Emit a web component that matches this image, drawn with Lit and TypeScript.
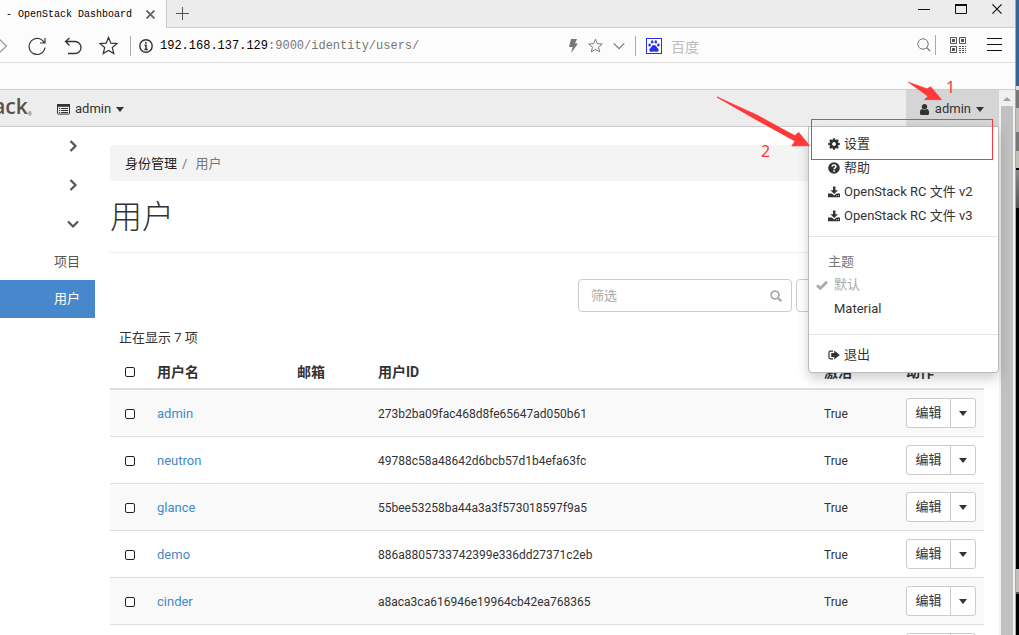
import { LitElement, html, css, svg, TemplateResult } from "lit";
import { customElement, property } from "lit/decorators.js";

const COG =
  "M1152 896q0-106-75-181t-181-75-181 75-75 181 75 181 181 75 181-75 75-181zm512-109v222q0 12-8 23t-20 13l-185 28q-19 54-39 91 35 50 107 138 10 12 10 25t-9 23q-27 37-99 108t-94 71q-12 0-26-9l-138-108q-44 23-91 38-16 136-29 186-7 28-36 28h-222q-14 0-24.5-8.5t-11.5-21.5l-28-184q-49-16-90-37l-141 107q-10 9-25 9-14 0-25-11-126-114-165-168-7-10-7-23 0-12 8-23 15-21 51-66.5t54-70.5q-27-50-41-99l-183-27q-13-2-21-12.5t-8-23.5v-222q0-12 8-23t19-13l186-28q14-46 39-92-40-57-107-138-10-12-10-24 0-10 9-23 26-36 98.5-107.5t94.5-71.5q13 0 26 10l138 107q44-23 91-38 16-136 29-186 7-28 36-28h222q14 0 24.5 8.5t11.5 21.5l28 184q49 16 90 37l142-107q9-9 24-9 13 0 25 10 129 119 165 170 7 8 7 22 0 12-8 23-15 21-51 66.5t-54 70.5q26 50 41 98l183 28q13 2 21 12.5t8 23.5z";
const USER =
  "M1536 1399q0 109-62.5 187t-150.5 78h-854q-88 0-150.5-78t-62.5-187q0-85 8.5-160.5t31.5-152 58.5-131 94-89 134.5-34.5q131 128 313 128t313-128q76 0 134.5 34.5t94 89 58.5 131 31.5 152 8.5 160.5zm-256-887q0 159-112.5 271.5t-271.5 112.5-271.5-112.5-112.5-271.5 112.5-271.5 271.5-112.5 271.5 112.5 112.5 271.5z";

interface Glyph {
  box: string;
  body: TemplateResult;
}

const GLYPHS: Record<string, Glyph> = {
  cog: { box: "100 100 1592 1592", body: svg`<path fill="currentColor" d=${COG} />` },
  user: { box: "128 128 1536 1536", body: svg`<path fill="currentColor" d=${USER} />` },
  help: {
    box: "0 0 12 12",
    body: svg`<circle cx="6" cy="6" r="5.8" fill="currentColor" />
      <path d="M4 4.6C4.1 2.6 8 2.5 8 4.6C8 6 6.2 5.9 6.1 7.3" fill="none" stroke="#fff" stroke-width="1.5" />
      <rect x="5.3" y="8.2" width="1.6" height="1.6" fill="#fff" />`,
  },
  download: {
    box: "0 0 12 12",
    body: svg`<path fill="currentColor" d="M5 .5h2.400v3.700h2.600L6.200 8 2.400 4.200H5z" />
      <path fill="currentColor" d="M0 7.400h3.800l2.400 2 2.300-2H12V11.200H0z" />
      <path stroke="#fff" stroke-width=".8" d="M8.200 9.700h.9M10 9.700h.9" />`,
  },
  check: {
    box: "0 0 12 12",
    body: svg`<path d="M1 6.200L4.300 9.400 11 2.800" fill="none" stroke="currentColor" stroke-width="2.800" />`,
  },
  exit: {
    box: "0 0 12 12",
    body: svg`<path d="M5 2.200H2.200Q1 2.200 1 3.400v5.200q0 1.200 1.200 1.200H5" fill="none" stroke="currentColor" stroke-width="1.200" />
      <path fill="currentColor" d="M3.200 4h3V1.500L11.800 6 6.200 10.500V8h-3z" />`,
  },
  list: {
    box: "0 0 13 11",
    body: svg`<rect x=".5" y=".5" width="12" height="9.600" rx=".8" fill="none" stroke="currentColor" />
      <path fill="currentColor" d="M0 0h13v2.800H0z" />
      <path stroke="currentColor" d="M2 4.500h1.200M4.200 4.500H11M2 6.500h1.200M4.200 6.500H11M2 8.500h1.200M4.200 8.500H11" />`,
  },
  caret: { box: "0 0 8 5", body: svg`<path fill="currentColor" d="M0 0h8L4 5z" />` },
  right: {
    box: "0 0 12 12",
    body: svg`<path d="M3.500 1L8.500 6 3.500 11" fill="none" stroke="currentColor" stroke-width="2.200" />`,
  },
  down: {
    box: "0 0 12 12",
    body: svg`<path d="M1 3.500L6 8.500 11 3.500" fill="none" stroke="currentColor" stroke-width="2.200" />`,
  },
  search: {
    box: "0 0 12 12",
    body: svg`<circle cx="5" cy="5" r="3.900" fill="none" stroke="currentColor" stroke-width="1.800" />
      <path d="M8 8l3.400 3.400" stroke="currentColor" stroke-width="2.200" />`,
  },
  thinSearch: {
    box: "0 0 14 14",
    body: svg`<circle cx="6" cy="6" r="5.200" fill="none" stroke="currentColor" />
      <path d="M9.800 9.800l3.400 3.200" stroke="currentColor" stroke-width="1.200" />`,
  },
  forward: { box: "0 0 8 16", body: svg`<path d="M-1 1L6.500 8-1 15" fill="none" stroke="currentColor" stroke-width="1.200" />` },
  reload: {
    box: "0 0 18 18",
    body: svg`<path d="M16.200 5.800A8 8 0 1 0 17 10.500M17 1v5h-5" fill="none" stroke="currentColor" stroke-width="1.200" />`,
  },
  undo: {
    box: "0 0 18 18",
    body: svg`<path d="M5.500 1L1.500 4.500l4 4M1.500 4.500H11a6 6 0 0 1 0 12H4" fill="none" stroke="currentColor" stroke-width="1.300" />`,
  },
  star: {
    box: "0 0 20 20",
    body: svg`<path d="M10 1.500l2.500 6 6.500.5-5 4.200 1.600 6.300L10 15.200l-5.600 3.300L6 12.200 1 8l6.500-.5z" fill="none" stroke="currentColor" stroke-width="1.300" />`,
  },
  info: {
    box: "0 0 14 14",
    body: svg`<circle cx="7" cy="7" r="6.200" fill="none" stroke="currentColor" stroke-width="1.400" />
      <path d="M6.900 3v1.800M5.600 6.300h1.400v4M5.400 10.400h3.400" fill="none" stroke="currentColor" stroke-width="1.500" />`,
  },
  bolt: { box: "0 0 10 14", body: svg`<path fill="currentColor" d="M3 0h6L7 4.600h3L3.200 14l1.400-6H1z" />` },
  chevron: { box: "0 0 12 12", body: svg`<path d="M.8 3.400L6 8.600l5.200-5.200" fill="none" stroke="currentColor" stroke-width="1.200" />` },
  paw: {
    box: "0 0 16 16",
    body: svg`<rect x=".5" y=".5" width="15" height="15" fill="#fff" stroke="currentColor" />
      <g fill="currentColor"><ellipse cx="3.600" cy="7" rx="1.300" ry="1.600" /><ellipse cx="6.200" cy="3.900" rx="1.300" ry="1.700" />
      <ellipse cx="9.800" cy="3.900" rx="1.300" ry="1.700" /><ellipse cx="12.400" cy="7" rx="1.300" ry="1.600" />
      <path d="M8 7c2 0 2.400 2 3.800 3.200 1.400 1.200 1 3.600-1 3.600-1 0-1.800-.4-2.800-.4s-1.800.4-2.800.4c-2 0-2.400-2.400-1-3.600C5.600 9 6 7 8 7z" /></g>`,
  },
  qr: {
    box: "0 0 16 16",
    body: svg`<g fill="none" stroke="currentColor"><path d="M.5.5h6v6h-6zM9.500.5h6v6h-6zM.5 9.500h6v6h-6z" />
      <path stroke-dasharray="2 1" d="M9 9.500h7M9 11.500h7M9 13.500h7M9 15.500h7" /></g>
      <path fill="currentColor" d="M2 2h3v3H2zM11 2h3v3h-3zM2 11h3v3H2z" />`,
  },
  menu: { box: "0 0 15 14", body: svg`<path stroke="currentColor" d="M0 .5h15M0 6.500h15M0 12.500h15" />` },
  close: { box: "0 0 8 8", body: svg`<path stroke="currentColor" stroke-width="1.700" d="M.5.5l7 7M7.500.5l-7 7" />` },
  plus: { box: "0 0 13 13", body: svg`<path stroke="currentColor" d="M6.500 0v13M0 6.500h13" />` },
  min: { box: "0 0 12 10", body: svg`<path stroke="currentColor" d="M0 5.500h12" />` },
  max: { box: "0 0 12 10", body: svg`<path fill="none" stroke="currentColor" d="M.5 1h11v8.500H.5z" /><path stroke="currentColor" stroke-width="2" d="M0 1h12" />` },
  quit: { box: "0 0 10 10", body: svg`<path stroke="currentColor" stroke-width="1.200" d="M.4.4l9.200 9.200M9.600.4L.4 9.600" />` },
  arrowUp: { box: "0 0 8 4", body: svg`<path fill="currentColor" d="M0 4L4 0l4 4z" />` },
};

function icon(name: string, width: number, height: number = width) {
  const g = GLYPHS[name];
  return html`<svg class="ico" width=${width} height=${height} viewBox=${g.box} aria-hidden="true">${g.body}</svg>`;
}

const base = css`
  * { box-sizing: border-box; }
  button, input {
    font: inherit;
    color: inherit;
    background: none;
    border: 0;
    padding: 0;
    margin: 0;
    border-radius: 0;
  }
  a { text-decoration: none; color: inherit; }
  ul, ol { list-style: none; margin: 0; padding: 0; }
  .ico { display: block; flex: none; }
`;

@customElement("browser-chrome")
export class BrowserChrome extends LitElement {
  static styles = [
    base,
    css`
      :host { display: block; background: #fcfcfc; color: #333; }
      .tabs {
        display: flex;
        height: 28px;
        background: #ececec;
        border-bottom: 1px solid #ccc;
      }
      .tab {
        display: flex;
        align-items: center;
        gap: 14px;
        height: 28px;
        padding: 0 11px 0 6px;
        background: #fcfcfc;
        border-right: 1px solid #ccc;
        font: 10px "Liberation Mono", monospace;
        color: #000;
      }
      .tab button { color: #666; }
      .new { margin-left: 9px; color: #555; }
      .win {
        display: flex;
        align-items: center;
        gap: 25px;
        margin-left: auto;
        padding: 0 13px 10px 0;
        color: #111;
      }
      .bar {
        display: flex;
        align-items: center;
        height: 35px;
        border-bottom: 1px solid #ddd;
      }
      .nav { display: flex; align-items: center; gap: 17px; padding-top: 1px; }
      .nav .go { color: #999; margin-right: 2px; }
      .sep { width: 1px; height: 20px; background: #aaa; }
      .nav .sep { margin-right: -9px; margin-left: -5px; }
      .url {
        flex: 1;
        padding: 2px 0 0 7px;
        font: 12px "Liberation Mono", monospace;
        color: #777;
      }
      .host { color: #000; }
      .quick {
        display: flex;
        align-items: center;
        gap: 10px;
        padding-top: 1px;
        color: #777;
      }
      .engine {
        display: flex;
        align-items: center;
        gap: 9px;
        width: 271px;
        color: #2932e1;
      }
      .engine input {
        width: 200px;
        font: 14px "Noto Sans CJK SC", sans-serif;
      }
      .engine input::placeholder { color: #bbb; opacity: 1; }
      .tools {
        display: flex;
        align-items: center;
        padding-right: 13px;
        color: #111;
      }
      .tools .find { color: #777; margin-right: 4px; }
      .tools .qr { color: #555; margin: 0 21px 0 14px; }
      .marks { height: 27px; border-bottom: 1px solid #ccc; }
    `,
  ];

  render() {
    return html`
      <div class="tabs">
        <div class="tab">
          <span>- OpenStack Dashboard</span>
          <button aria-label="关闭标签页">${icon("close", 9)}</button>
        </div>
        <button class="new" aria-label="新标签页">${icon("plus", 13)}</button>
        <div class="win">
          <button aria-label="最小化">${icon("min", 12, 10)}</button>
          <button aria-label="最大化">${icon("max", 12, 10)}</button>
          <button aria-label="关闭">${icon("quit", 10)}</button>
        </div>
      </div>
      <div class="bar">
        <div class="nav">
          <button class="go" aria-label="前进">${icon("forward", 8, 16)}</button>
          <button aria-label="刷新">${icon("reload", 20, 18)}</button>
          <button aria-label="撤销">${icon("undo", 18)}</button>
          <button aria-label="收藏">${icon("star", 19)}</button>
          <span class="sep"></span>
          ${icon("info", 14)}
        </div>
        <div class="url"><span class="host">192.168.137.129</span>:9000/identity/users/</div>
        <div class="quick">
          <button aria-label="极速模式">${icon("bolt", 10, 14)}</button>
          <button aria-label="添加书签">${icon("star", 15)}</button>
          <button aria-label="展开">${icon("chevron", 12)}</button>
          <span class="sep"></span>
          <div class="engine">
            ${icon("paw", 16)}
            <input type="text" placeholder="百度" aria-label="搜索" />
          </div>
        </div>
        <div class="tools">
          <button class="find" aria-label="搜索">${icon("thinSearch", 14)}</button>
          <span class="sep"></span>
          <button class="qr" aria-label="二维码">${icon("qr", 16)}</button>
          <button aria-label="菜单">${icon("menu", 15, 14)}</button>
        </div>
      </div>
      <div class="marks"></div>
    `;
  }
}

@customElement("top-nav")
export class TopNav extends LitElement {
  static styles = [
    base,
    css`
      :host { display: block; }
      .nav {
        display: flex;
        height: 37px;
        background: #ededed;
        border-bottom: 1px solid #ccc;
      }
      .brand {
        display: flex;
        justify-content: flex-end;
        align-items: center;
        width: 32px;
        overflow: hidden;
        color: #5a5250;
        font: 600 21px/30px "Open Sans", sans-serif;
        padding-bottom: 4px;
      }
      .brand small { font-size: 5px; line-height: 6px; align-self: flex-end; padding-bottom: 5px; font-weight: 400; }
      .pick { display: flex; align-items: center; gap: 5px; padding: 2px 15px 0 14px; }
      .project { margin-left: 11px; }
      .user { position: relative; display: flex; margin-left: auto; }
      .user .pick { background: #d5d5d5; padding-left: 13px; }
      .menu {
        position: absolute;
        z-index: 2;
        top: 36px;
        right: 0;
        width: 191px;
        padding: 5px 0;
        background: #fff;
        border: 1px solid #bbb;
        border-radius: 0 0 4px 4px;
        box-shadow: 0 6px 12px rgba(0, 0, 0, 0.18);
      }
      .menu a {
        display: flex;
        align-items: center;
        gap: 4px;
        height: 24px;
        padding-left: 19px;
        white-space: pre;
      }
      .menu .theme { padding-left: 25px; }
      .menu .on { padding-left: 7px; gap: 6px; color: #aaa; }
      .line { height: 1px; margin: 8px 0; background: #e5e5e5; }
      .title { height: 28px; padding: 5px 0 0 19px; line-height: 23px; color: #777; }
      .themes { padding-bottom: 5px; }
    `,
  ];

  render() {
    return html`
      <nav class="nav">
        <a class="brand" href="#">ack<small>®</small></a>
        <button class="pick project">${icon("list", 13, 11)}<span>admin</span>${icon("caret", 8, 5)}</button>
        <div class="user">
          <button class="pick" aria-expanded="true">${icon("user", 11)}<span>admin</span>${icon("caret", 8, 5)}</button>
          <div class="menu">
            <a href="#">${icon("cog", 12)}设置</a>
            <a href="#">${icon("help", 12)}帮助</a>
            <a href="#">${icon("download", 12)}OpenStack RC 文件 v2</a>
            <a href="#">${icon("download", 12)}OpenStack RC 文件 v3</a>
            <div class="line"></div>
            <div class="title">主题</div>
            <div class="themes">
              <a class="on" href="#">${icon("check", 12)}默认</a>
              <a class="theme" href="#">Material</a>
            </div>
            <div class="line"></div>
            <a href="#">${icon("exit", 12)}退出</a>
          </div>
        </div>
      </nav>
    `;
  }
}

@customElement("side-nav")
export class SideNav extends LitElement {
  static styles = [
    base,
    css`
      :host { display: block; width: 95px; flex: none; color: #555; }
      .group, .sub a {
        display: flex;
        width: 100%;
        align-items: center;
        justify-content: flex-end;
        padding-right: 16px;
      }
      .group { height: 39px; padding-bottom: 2px; }
      .sub a { height: 36px; padding-right: 15px; }
      .sub .on { height: 38px; background: #4788cc; color: #fff; }
    `,
  ];

  render() {
    return html`
      <button class="group" aria-label="项目面板">${icon("right", 12)}</button>
      <button class="group" aria-label="管理员">${icon("right", 12)}</button>
      <button class="group" aria-label="身份管理">${icon("down", 12)}</button>
      <ul class="sub">
        <li><a href="#">项目</a></li>
        <li><a class="on" href="#">用户</a></li>
      </ul>
    `;
  }
}

interface Account {
  name: string;
  id: string;
  enabled: string;
}

@customElement("user-table")
export class UserTable extends LitElement {
  @property({ attribute: false }) rows: Account[] = [];

  static styles = [
    base,
    css`
      :host { display: block; }
      table { width: 100%; table-layout: fixed; border-collapse: separate; border-spacing: 0; }
      caption { height: 34px; padding: 0 9px; line-height: 36px; text-align: left; }
      th, td { padding: 2px 8px 0; text-align: left; white-space: nowrap; }
      th { height: 36px; border-bottom: 2px solid #ddd; font-weight: 700; font-size: 14px; }
      td { height: 47px; border-bottom: 1px solid #ddd; }
      tbody tr:nth-child(odd) { background: #f9f9f9; }
      .c-check { width: 39px; }
      .c-name { width: 140px; }
      .c-mail { width: 81px; }
      .c-on { width: 82px; }
      .c-act { width: 86px; }
      .check { padding-left: 15px; }
      .check input {
        display: block;
        appearance: none;
        width: 10px;
        height: 10px;
        border: 1px solid #222;
        border-radius: 2px;
        background: #fff;
      }
      .name { color: #428bca; }
      .small { font-size: 12px; }
      .act { padding-top: 0; }
      .split {
        display: flex;
        width: 70px;
        height: 30px;
        border: 1px solid #ccc;
        border-radius: 3px;
        background: #fff;
      }
      .edit { flex: 1; }
      .more { display: grid; place-items: center; width: 25px; border-left: 1px solid #ccc; }
    `,
  ];

  render() {
    return html`
      <table>
        <caption>正在显示 7 项</caption>
        <colgroup>
          <col class="c-check" /><col class="c-name" /><col class="c-mail" /><col />
          <col class="c-on" /><col class="c-act" />
        </colgroup>
        <thead>
          <tr>
            <th class="check"><input type="checkbox" aria-label="全选" /></th>
            <th>用户名</th>
            <th>邮箱</th>
            <th>用户ID</th>
            <th>激活</th>
            <th>动作</th>
          </tr>
        </thead>
        <tbody>
          ${this.rows.map(
            (r) => html`<tr>
              <td class="check"><input type="checkbox" aria-label="选择 ${r.name}" /></td>
              <td><a class="name" href="#">${r.name}</a></td>
              <td></td>
              <td class="small">${r.id}</td>
              <td class="small">${r.enabled}</td>
              <td class="act">
                <div class="split">
                  <button class="edit">编辑</button>
                  <button class="more" aria-label="更多动作">${icon("caret", 8, 5)}</button>
                </div>
              </td>
            </tr>`
          )}
        </tbody>
      </table>
    `;
  }
}

@customElement("guide-marks")
export class GuideMarks extends LitElement {
  static styles = css`
    :host {
      position: absolute;
      z-index: 5;
      top: 75px;
      right: 19px;
      width: 290px;
      height: 90px;
      pointer-events: none;
      color: #ff3838;
      font: 16px/20px "Noto Sans", sans-serif;
    }
    svg { display: block; }
    .one, .two { position: absolute; }
    .one { left: 236px; top: 2px; }
    .two { left: 51px; top: 66px; }
  `;

  render() {
    return html`
      <svg width="290" height="90" viewBox="710 75 290 90" aria-hidden="true">
        <g fill="currentColor" stroke="currentColor" stroke-width=".6">
          <path d="M908 82L927 88.700l3.700-2L941.700 99.700H924.300l3.700-3.400z" />
          <path d="M717 97l77.700 38.700 4-3.400 11 13.400-18 .3 3.300-5z" transform="translate(0 0)" />
          <path d="M717 97l40 18 37.700 20.700v5L755 119z" />
        </g>
        <rect x="811.500" y="119.500" width="181" height="40" fill="none" stroke="currentColor" />
      </svg>
      <span class="one">1</span>
      <span class="two">2</span>
    `;
  }
}

@customElement("app-root")
export class AppRoot extends LitElement {
  private accounts: Account[] = [
    { name: "admin", id: "273b2ba09fac468d8fe65647ad050b61", enabled: "True" },
    { name: "neutron", id: "49788c58a48642d6bcb57d1b4efa63fc", enabled: "True" },
    { name: "glance", id: "55bee53258ba44a3a3f573018597f9a5", enabled: "True" },
    { name: "demo", id: "886a8805733742399e336dd27371c2eb", enabled: "True" },
    { name: "cinder", id: "a8aca3ca616946e19964cb42ea768365", enabled: "True" },
    { name: "", id: "", enabled: "" },
  ];

  static styles = [
    base,
    css`
      :host {
        display: grid;
        grid-template-columns: minmax(0, 1fr) 3px;
        position: relative;
        height: 100vh;
        overflow: hidden;
        background: #fff;
        color: #333;
        font: 13px/18px Roboto, "Noto Sans CJK SC", sans-serif;
      }
      .window {
        display: flex;
        flex-direction: column;
        min-height: 0;
        border-right: 1px solid #aaa;
      }
      .desk {
        background: linear-gradient(
          #33649c 86px, #ddd 86px 90px, #777 90px 108px, #c4beb8 108px 132px,
          #777 132px 151px, #c4beb8 151px 168px, #000 168px 170px, #888 170px, #555 208px,
          #000 208px 569px, #c4beb8 569px 592px, #555 592px 594px, #000 594px
        );
      }
      .view { flex: 1; display: flex; min-height: 0; }
      .page { flex: 1; min-width: 0; }
      .scroll {
        display: flex;
        flex-direction: column;
        align-items: center;
        gap: 5px;
        width: 16px;
        padding-top: 7px;
        background: #f0f0f0;
        color: #a0a0a0;
      }
      .thumb { flex: 1; width: 12px; background: #c0c0c0; }
      .body { display: flex; }
      main { flex: 1; min-width: 0; padding: 18px 15px 0; }
      .crumbs {
        display: flex;
        align-items: center;
        gap: 6px;
        height: 36px;
        padding: 2px 15px 0;
        background: #f4f4f4;
        border-radius: 4px;
        color: #777;
      }
      .crumbs a { color: #222; }
      .crumbs li { display: flex; gap: 5px; }
      .crumbs .here { padding-left: 2px; }
      h1 {
        height: 72px;
        margin: 0;
        border-bottom: 1px solid #eee;
        font: 300 32px/72px Roboto, "Noto Sans CJK SC", sans-serif;
      }
      .actions {
        display: flex;
        justify-content: flex-end;
        gap: 4px;
        padding: 26px 0 8px;
      }
      .filter {
        display: flex;
        align-items: center;
        width: 214px;
        height: 33px;
        padding: 0 9px 0 12px;
        border: 1px solid #ccc;
        border-radius: 4px;
        color: #aaa;
      }
      .filter input { flex: 1; min-width: 0; }
      .filter input::placeholder { color: #aaa; opacity: 1; }
      .create { width: 188px; height: 33px; border: 1px solid #ccc; border-radius: 4px; }
    `,
  ];

  render() {
    return html`
      <div class="window">
        <browser-chrome></browser-chrome>
        <div class="view">
          <div class="page">
            <top-nav></top-nav>
            <div class="body">
              <side-nav></side-nav>
              <main>
                <ol class="crumbs">
                  <li><a href="#">身份管理</a><span>/</span></li>
                  <li class="here">用户</li>
                </ol>
                <h1>用户</h1>
                <div class="actions">
                  <label class="filter">
                    <input type="text" placeholder="筛选" aria-label="筛选" />
                    ${icon("search", 12)}
                  </label>
                  <button class="create" aria-label="创建用户"></button>
                </div>
                <user-table .rows=${this.accounts}></user-table>
              </main>
            </div>
          </div>
          <div class="scroll">${icon("arrowUp", 8, 4)}<div class="thumb"></div></div>
        </div>
      </div>
      <div class="desk"></div>
      <guide-marks></guide-marks>
    `;
  }
}
